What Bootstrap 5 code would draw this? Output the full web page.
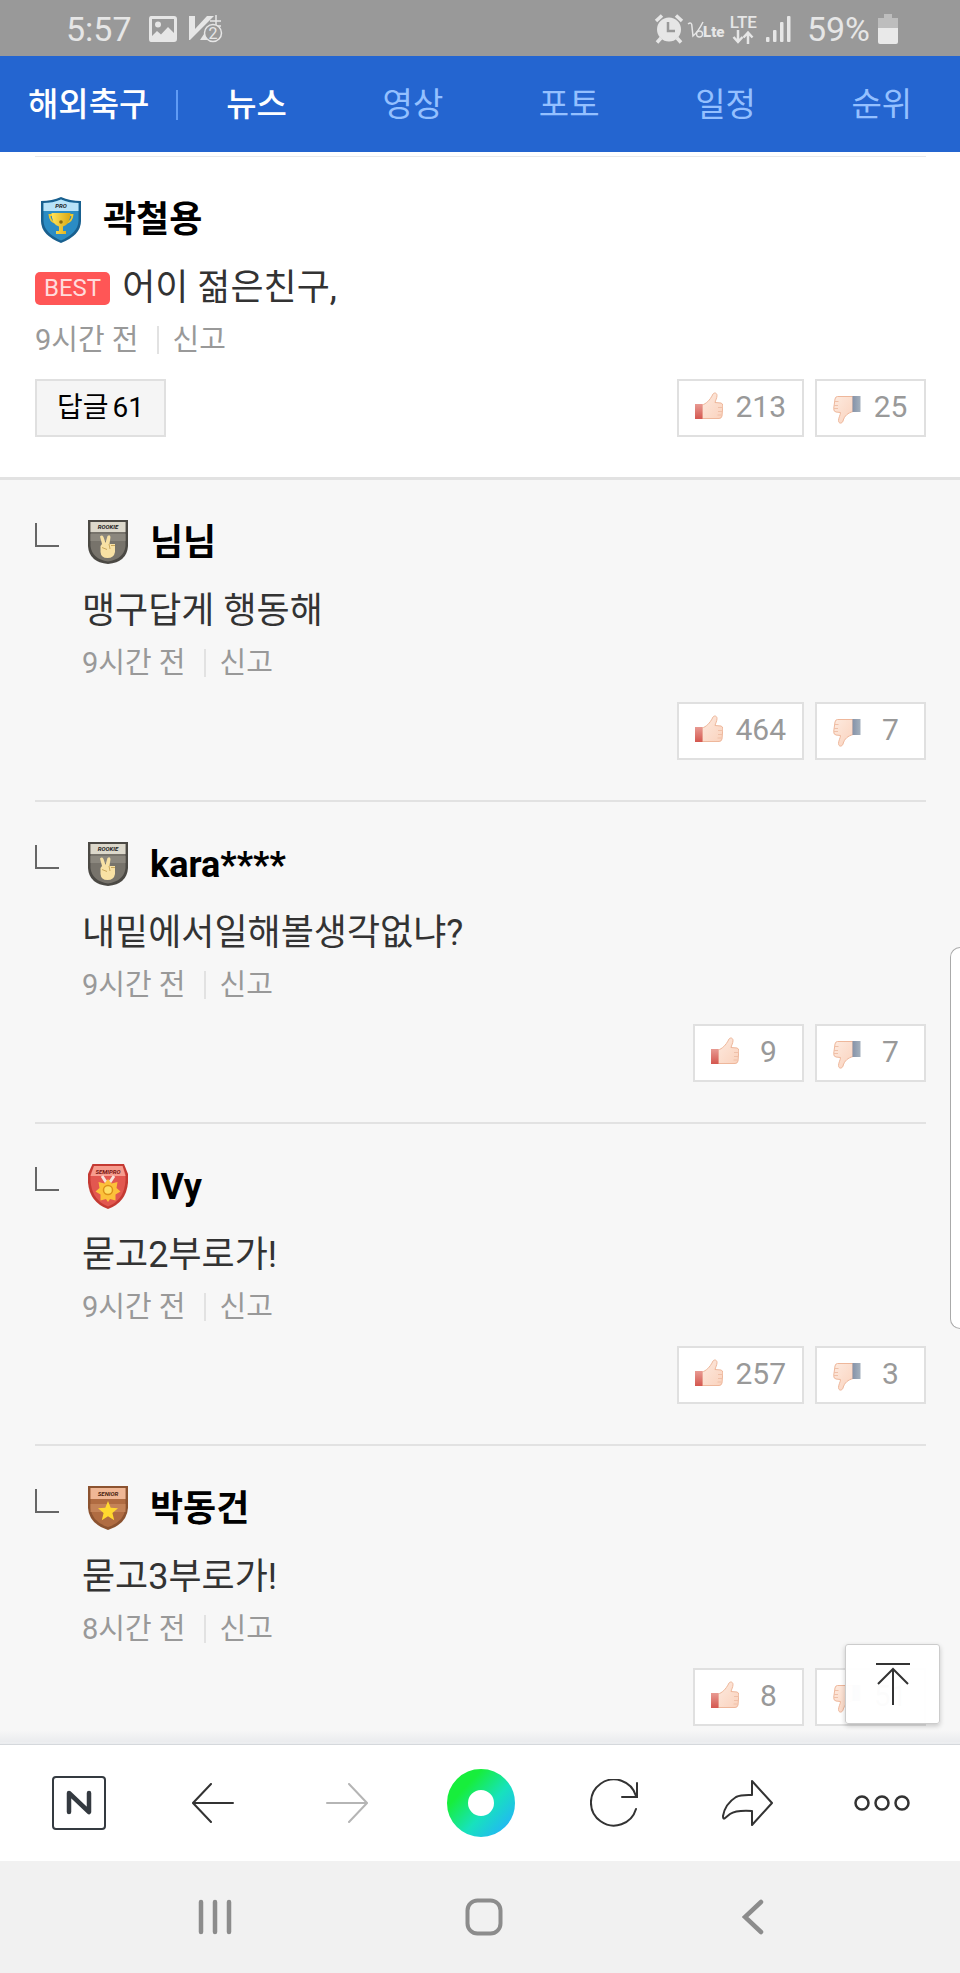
<!DOCTYPE html>
<html lang="ko">
<head>
<meta charset="utf-8">
<meta name="viewport" content="width=device-width, initial-scale=1">
<title>해외축구 뉴스 댓글</title>
<link href="https://cdn.jsdelivr.net/npm/bootstrap@5.3.0/dist/css/bootstrap.min.css" rel="stylesheet">
<style>
  body { font-family: Roboto, "Noto Sans CJK KR", sans-serif; background: #fff; color: #333; }
  button { font-family: inherit; }
  svg { display: block; flex: none; }

  .status-bar { height: 56px; background: #999; color: #e6e6e6; font-size: 34px; line-height: 56px; padding: 2px 62px 0 66px; }
  .net-label { font-size: 17px; line-height: 15px; font-weight: 500; }

  .topnav { height: 96px; background: #2465d0; font-size: 33px; line-height: 48px; padding-top: 2px; }
  .topnav a { color: #94c0ff; text-decoration: none; text-align: center; }
  .topnav a.brand-link { color: #fff; font-weight: 500; padding: 0 27px 0 28px; }
  .topnav a.active { color: #fff; font-weight: 500; }
  .topnav .rule { width: 2px; height: 30px; background: #5f9bf5; }
  .topnav .tabs > a { flex: 1 1 0; }

  .feed { scrollbar-width: none; }
  .feed::-webkit-scrollbar { display: none; }
  .gutter { padding-left: 35px; padding-right: 34px; }
  .top-line { height: 1px; background: #e9e9e9; margin: 4px 34px 0 35px; }
  .comment-main { padding-top: 41px; padding-bottom: 40px; border-bottom: 3px solid #e2e2e2; }
  .replies { background: #f7f7f7; }
  .reply { padding: 41px 0 40px; border-bottom: 2px solid #e2e2e2; }
  .reply:last-child { padding-bottom: 16px; border-bottom: 0; }
  .hook { width: 24px; height: 24px; border: solid #666; border-width: 0 0 2px 2px; margin: 2px 23px 0 0; flex: none; }

  .who { height: 44px; gap: 22px; padding-left: 6px; margin-bottom: 22px; }
  .who strong { font-size: 36px; line-height: 44px; font-weight: 700; color: #000; }
  .shield-label { font-size: 6px; font-weight: 700; font-style: italic; text-anchor: middle; }
  .body-text { font-size: 36px; line-height: 48px; margin-bottom: 8px; gap: 12px; }
  .best { background: #ff5656; color: #ffdcdc; font-size: 24px; line-height: 33px; font-weight: 400; border-radius: 5px; padding: 0 9px; }
  .meta { font-size: 29px; line-height: 40px; color: #999; margin-bottom: 19px; }
  .meta .rule { width: 2px; height: 28px; background: #e2e2e2; margin: 0 14px 0 18px; }
  .meta a { color: #999; text-decoration: none; }

  .box-btn { height: 58px; border: 2px solid #e0e0e0; background: #fff; color: #999; font-size: 30px; line-height: 50px; border-radius: 0; padding: 0 16px 2px; display: flex; align-items: center; gap: 12px; }
  .box-btn .count { min-width: 35px; text-align: center; }
  .box-btn.reply-btn { background: #f5f5f5; color: #000; font-size: 28px; padding: 0 20px; gap: 4px; }
  .votes { gap: 11px; }

  .to-top { right: 20px; bottom: 20px; width: 95px; height: 80px; background: rgba(255,255,255,.97); border: 1px solid #ccc; border-radius: 3px; box-shadow: 0 2px 5px rgba(0,0,0,.2); padding: 0; }
  .edge-handle { right: 0; top: 795px; width: 10px; height: 382px; background: #fff; border: 1px solid #aaa; border-right: 0; border-radius: 12px 0 0 12px; }
  .feed-fade { left: 0; right: 0; bottom: 0; height: 14px; background: linear-gradient(rgba(226,228,232,0), rgba(226,228,232,.7)); }

  .toolbar { height: 117px; border-top: 1px solid #d5d8dc; padding: 0 11px 0 12px; background: #fff; }
  .sysnav { height: 112px; background: #f1f1f1; padding: 0 72px 0 80px; }
  .bare { flex: 1 1 0; background: none; border: 0; padding: 0; display: flex; justify-content: center; align-items: center; }
</style>
</head>
<body>

<svg width="0" height="0" class="position-absolute" aria-hidden="true">
  <defs>
    <linearGradient id="gSkin" x1="0" y1="0" x2="1" y2="1"><stop offset="0" stop-color="#fdeadf"/><stop offset="1" stop-color="#fad2bd"/></linearGradient>
    <linearGradient id="gRedCuff" x1="0" y1="0" x2="0" y2="1"><stop offset="0" stop-color="#e89a92"/><stop offset="1" stop-color="#d4574f"/></linearGradient>
    <linearGradient id="gBlueCuff" x1="0" y1="0" x2="1" y2="0"><stop offset="0" stop-color="#8592a8"/><stop offset="1" stop-color="#a3b0bd"/></linearGradient>
    <linearGradient id="gRing" gradientUnits="userSpaceOnUse" x1="10" y1="14" x2="60" y2="60"><stop offset=".15" stop-color="#17ee3c"/><stop offset=".6" stop-color="#17e2bd"/><stop offset="1" stop-color="#22b9f2"/></linearGradient>
    <linearGradient id="gGold" x1="0" y1="0" x2="1" y2="0"><stop offset="0" stop-color="#ffe45a"/><stop offset="1" stop-color="#d9a712"/></linearGradient>
  </defs>
  <symbol id="thumb-up" viewBox="0 0 28 30">
    <path d="M7 13C11 12 15 8 17.500 3C18.500 0 22 .5 22 3.500C22 6 20.500 8.500 20 10.500L26 11Q28 11.500 27.800 14L27 24Q26.500 26.500 24 26.500H7Z" fill="url(#gSkin)" stroke="#eeb79b"/>
    <path d="M23 15.500h4M23 19.500h4M22.500 23h4" stroke="#efc0a8" fill="none"/>
    <rect y="12" width="7.500" height="15" fill="url(#gRedCuff)"/>
  </symbol>
  <symbol id="thumb-down" viewBox="0 -6 28 36">
    <path d="M20 1.500H4.500Q2.500 1.500 2 4L.7 13.500Q.5 16.500 3 17L7.500 17.500C7.500 20 5.500 22.500 5.500 25.500C5.500 28.800 9 29 10 26C11.500 20.500 15 18 20 16.500Z" fill="url(#gSkin)" stroke="#eeb79b"/>
    <path d="M1.500 6.500h4M1 10.500h4M1 13.500h4" stroke="#efc0a8" fill="none"/>
    <rect x="19.500" y="1" width="8" height="16" fill="url(#gBlueCuff)"/>
  </symbol>
  <symbol id="shield-pro" viewBox="0 0 40 46">
    <path d="M0 4Q11 4 20 0Q29 4 40 4V24Q40 38 20 46Q0 38 0 24Z" fill="#19608f"/>
    <path d="M2.500 6Q12 6 20 2.500Q28 6 37.500 6V24Q37 36 20 43.500Q3 36 2.500 24Z" fill="#2b8cc4"/>
    <path d="M2.500 6Q12 6 20 2.500Q28 6 37.500 6V14H2.500Z" fill="#b9e3f8"/>
    <path d="M11 18H8.500Q9 25 15 26M29 18h2.500Q31 25 25 26" fill="none" stroke="#f3c92a" stroke-width="1.800"/>
    <path d="M10.500 16H29.500Q29 28 22 29.500V34H25V37H15V34H18V29.500Q11 28 10.500 16Z" fill="url(#gGold)"/>
    <circle cx="20" cy="25" r="1.800" fill="#8a6a10"/>
  </symbol>
  <symbol id="shield-rookie" viewBox="0 0 40 46">
    <path d="M0 0H40V26Q39 42 20 44Q1 42 0 26Z" fill="#4b4944"/>
    <path d="M2.500 2H37.500V26Q36 39 20 41.500Q4 39 2.500 26Z" fill="#77736b"/>
    <path d="M2.500 14H37.500V21H2.500Z" fill="#8b877e"/>
    <path d="M2.500 2H37.500V12H2.500Z" fill="#dcd8cb"/>
    <path d="M12 16.500Q14 14.500 15.500 17L17.500 23L19.500 16Q22 14 22.500 17L21.500 24H27V32Q26 38 19.500 38Q13 38 12.500 32V26L14 24Z" fill="#f8e1a4"/>
    <path d="M14 27.500l5 2M21 24l1 5M27 25.500h-4" stroke="#c9a75c" fill="none"/>
  </symbol>
  <symbol id="shield-semipro" viewBox="0 0 40 46">
    <path d="M4.500 0H36L40 10Q42 37 20 45Q-2 37 0 10Z" fill="#c43a33"/>
    <path d="M6 2H34.500L37.500 10Q39 35 20 42.500Q1 35 2.500 10Z" fill="#e25750"/>
    <path d="M6 2H34.500L37.500 12H2.500Z" fill="#f69c8e"/>
    <path d="M14 12l6 9 6-9" stroke="#f6e3dc" stroke-width="3" fill="none"/>
    <path d="M20 15l3.500 4.500 6-1.500-1 6 4 3.500-5 3 0 6-5.500-1.500-2 3-2-3-5.500 1.500 0-6-5-3 4-3.500-1-6 6 1.500Z" fill="#fcc13a"/>
    <circle cx="20" cy="26" r="4.500" fill="#ffdf63" stroke="#dc9219" stroke-width="1.500"/>
  </symbol>
  <symbol id="shield-senior" viewBox="0 0 40 46">
    <path d="M0 0H40V22Q39 38 20 44Q1 38 0 22Z" fill="#8c5330"/>
    <path d="M2.500 2H37.500V22Q36 36 20 41Q4 36 2.500 22Z" fill="#b06c42"/>
    <path d="M2.500 18H37.500V26H2.500Z" fill="#c48358"/>
    <path d="M2.500 2H37.500V13H2.500Z" fill="#f0b795"/>
    <path d="M20 15l2.700 6.800 7.300.5-5.600 4.700 1.800 7.200-6.200-4-6.200 4 1.800-7.200-5.600-4.700 7.300-.5Z" fill="#ffd92f"/>
  </symbol>
</svg>

<div class="d-flex flex-column vh-100">

  <div class="status-bar d-flex justify-content-between">
    <div class="d-flex align-items-center">
      <span>5:57</span>
      <svg class="ms-3" width="30" height="28" viewBox="0 0 30 28" fill="#e6e6e6"><path fill-rule="evenodd" d="M3 1H26Q29 1 29 4V24Q29 27 26 27H3Q1 27 1 24V4Q1 1 3 1ZM4 4V21L9 16L13 19.500L20 12L26 18V4ZM10 6.500a3 3 0 1 1 0 6a3 3 0 0 1 0-6Z"/></svg>
      <svg class="ms-2" width="38" height="32" viewBox="0 0 38 32"><path d="M3 3H9V16L21 3H28L4 27H3Z" fill="#e6e6e6"/><path d="M14 27l6-9 3 9Z" fill="#e6e6e6"/><g fill="none" stroke="#e6e6e6" stroke-width="1.500"><path d="M24 8H35M30 2v11M24 13h11"/><circle cx="27" cy="20" r="8.500" fill="#999"/></g><text x="27" y="26" text-anchor="middle" font-size="16" fill="#e6e6e6">2</text></svg>
    </div>
    <div class="d-flex align-items-center">
      <svg width="32" height="30" viewBox="0 0 32 30"><circle cx="15" cy="15.500" r="12" fill="#e6e6e6"/><path d="M2 7l6-5.500M28 7l-6-5.500M7 24l-4 4.500M23 24l4 4.500" stroke="#e6e6e6" stroke-width="3.500"/><path d="M14 8v9h7" fill="none" stroke="#999" stroke-width="2.500"/></svg>
      <svg width="40" height="28" viewBox="0 0 40 28" fill="#e6e6e6"><path d="M2 9Q6 6 6 12L7 21Q12 17 17 7" fill="none" stroke="#e6e6e6" stroke-width="1.500"/><circle cx="13.500" cy="19" r="3" fill="none" stroke="#e6e6e6" stroke-width="1.300"/><text x="17" y="22" font-size="15" font-weight="900">Lte</text></svg>
      <div class="ms-1 d-flex flex-column align-items-center">
        <span class="net-label">LTE</span>
        <svg width="22" height="14" viewBox="0 0 22 14" fill="none" stroke="#e6e6e6" stroke-width="2.500"><path d="M6 0v12M1.500 7l4.500 5 4.500-5M16 14V3M11.500 7.500L16 2.500l4.500 5"/></svg>
      </div>
      <svg class="ms-2" width="26" height="28" viewBox="0 0 26 28" fill="#e6e6e6"><rect x="1" y="22" width="3.500" height="5" rx="1"/><rect x="8" y="15" width="3.500" height="12" rx="1"/><rect x="15" y="7" width="3.500" height="20" rx="1"/><rect x="22" y="1" width="3.500" height="26" rx="1"/></svg>
      <span class="ms-3">59%</span>
      <svg class="ms-2" width="20" height="30" viewBox="0 0 20 30"><path d="M6 0h8v4h6v12H0V4h6Z" fill="#bdbdbd"/><path d="M0 14H20V28Q20 30 18 30H2Q0 30 0 28Z" fill="#e9e9e9"/></svg>
    </div>
  </div>

  <nav class="topnav d-flex align-items-center">
    <a class="brand-link" href="#">해외축구</a>
    <span class="rule"></span>
    <div class="tabs d-flex flex-fill">
      <a class="active" href="#" aria-current="page">뉴스</a>
      <a href="#">영상</a>
      <a href="#">포토</a>
      <a href="#">일정</a>
      <a href="#">순위</a>
    </div>
  </nav>

  <div class="position-relative flex-fill overflow-hidden">
    <main class="feed h-100 overflow-auto">
      <div class="top-line"></div>
      <article class="comment-main gutter">
        <div class="who d-flex align-items-center"><svg width="40" height="46"><use href="#shield-pro"/><text class="shield-label" x="20" y="11" fill="#222">PRO</text></svg><strong>곽철용</strong></div>
        <div class="body-text d-flex align-items-center"><span class="best">BEST</span><span>어이 젊은친구,</span></div>
        <div class="meta d-flex align-items-center"><span>9시간 전</span><span class="rule"></span><a href="#">신고</a></div>
        <div class="d-flex justify-content-between">
          <button class="box-btn reply-btn" type="button"><span>답글</span><span>61</span></button>
          <div class="votes d-flex">
            <button class="box-btn" type="button" aria-label="좋아요"><svg width="28" height="30"><use href="#thumb-up"/></svg><span class="count">213</span></button>
            <button class="box-btn" type="button" aria-label="싫어요"><svg width="28" height="36"><use href="#thumb-down"/></svg><span class="count">25</span></button>
          </div>
        </div>
      </article>

      <section class="replies gutter">
        <article class="reply d-flex">
          <span class="hook"></span>
          <div class="flex-fill">
            <div class="who d-flex align-items-center"><svg width="40" height="46"><use href="#shield-rookie"/><text class="shield-label" x="20" y="9" fill="#222">ROOKIE</text></svg><strong>님님</strong></div>
            <div class="body-text">맹구답게 행동해</div>
            <div class="meta d-flex align-items-center"><span>9시간 전</span><span class="rule"></span><a href="#">신고</a></div>
            <div class="votes d-flex justify-content-end">
              <button class="box-btn" type="button" aria-label="좋아요"><svg width="28" height="30"><use href="#thumb-up"/></svg><span class="count">464</span></button>
              <button class="box-btn" type="button" aria-label="싫어요"><svg width="28" height="36"><use href="#thumb-down"/></svg><span class="count">7</span></button>
            </div>
          </div>
        </article>
        <article class="reply d-flex">
          <span class="hook"></span>
          <div class="flex-fill">
            <div class="who d-flex align-items-center"><svg width="40" height="46"><use href="#shield-rookie"/><text class="shield-label" x="20" y="9" fill="#222">ROOKIE</text></svg><strong>kara****</strong></div>
            <div class="body-text">내밑에서일해볼생각없냐?</div>
            <div class="meta d-flex align-items-center"><span>9시간 전</span><span class="rule"></span><a href="#">신고</a></div>
            <div class="votes d-flex justify-content-end">
              <button class="box-btn" type="button" aria-label="좋아요"><svg width="28" height="30"><use href="#thumb-up"/></svg><span class="count">9</span></button>
              <button class="box-btn" type="button" aria-label="싫어요"><svg width="28" height="36"><use href="#thumb-down"/></svg><span class="count">7</span></button>
            </div>
          </div>
        </article>
        <article class="reply d-flex">
          <span class="hook"></span>
          <div class="flex-fill">
            <div class="who d-flex align-items-center"><svg width="40" height="46"><use href="#shield-semipro"/><text class="shield-label" x="20" y="10" fill="#7a1712">SEMIPRO</text></svg><strong>IVy</strong></div>
            <div class="body-text">묻고2부로가!</div>
            <div class="meta d-flex align-items-center"><span>9시간 전</span><span class="rule"></span><a href="#">신고</a></div>
            <div class="votes d-flex justify-content-end">
              <button class="box-btn" type="button" aria-label="좋아요"><svg width="28" height="30"><use href="#thumb-up"/></svg><span class="count">257</span></button>
              <button class="box-btn" type="button" aria-label="싫어요"><svg width="28" height="36"><use href="#thumb-down"/></svg><span class="count">3</span></button>
            </div>
          </div>
        </article>
        <article class="reply d-flex">
          <span class="hook"></span>
          <div class="flex-fill">
            <div class="who d-flex align-items-center"><svg width="40" height="46"><use href="#shield-senior"/><text class="shield-label" x="20" y="10" fill="#4a2410">SENIOR</text></svg><strong>박동건</strong></div>
            <div class="body-text">묻고3부로가!</div>
            <div class="meta d-flex align-items-center"><span>8시간 전</span><span class="rule"></span><a href="#">신고</a></div>
            <div class="votes d-flex justify-content-end">
              <button class="box-btn" type="button" aria-label="좋아요"><svg width="28" height="30"><use href="#thumb-up"/></svg><span class="count">8</span></button>
              <button class="box-btn" type="button" aria-label="싫어요"><svg width="28" height="36"><use href="#thumb-down"/></svg><span class="count">51</span></button>
            </div>
          </div>
        </article>
      </section>
    </main>

    <div class="feed-fade position-absolute"></div>
    <div class="edge-handle position-absolute"></div>
    <button class="to-top position-absolute d-flex justify-content-center align-items-center" type="button" aria-label="맨 위로">
      <svg width="36" height="44" viewBox="0 0 36 44" fill="none" stroke="#333" stroke-width="2"><path d="M1 2H35M18 43V8M3 22L18 7L33 22"/></svg>
    </button>
  </div>

  <div class="toolbar d-flex">
    <button class="bare" type="button" aria-label="홈"><svg width="54" height="54" viewBox="0 0 54 54" fill="none" stroke="#343a40"><rect x="1" y="1" width="52" height="52" rx="3" stroke-width="2"/><path d="M17 36V17L37 36V17" stroke-width="4.500" stroke-linecap="round" stroke-linejoin="round"/></svg></button>
    <button class="bare" type="button" aria-label="뒤로"><svg width="42" height="40" viewBox="0 0 42 40" fill="none" stroke="#333" stroke-width="2" stroke-linecap="round"><path d="M41 20H1M19 1L1 20L19 39"/></svg></button>
    <button class="bare" type="button" aria-label="앞으로"><svg width="42" height="40" viewBox="0 0 42 40" fill="none" stroke="#b5b5b5" stroke-width="2" stroke-linecap="round"><path d="M1 20H41M23 1L41 20L23 39"/></svg></button>
    <button class="bare" type="button" aria-label="그린닷"><svg width="70" height="70" viewBox="0 0 70 70"><circle cx="35" cy="35" r="23.500" fill="none" stroke="url(#gRing)" stroke-width="21"/></svg></button>
    <button class="bare" type="button" aria-label="새로고침"><svg width="48" height="48" viewBox="0 0 48 48" fill="none" stroke="#333" stroke-width="2" stroke-linecap="round"><path d="M46 30A23 23 0 1 1 46 17M47 4V18H32"/></svg></button>
    <button class="bare" type="button" aria-label="공유"><svg width="52" height="46" viewBox="0 0 52 46" fill="none" stroke="#333" stroke-width="2" stroke-linejoin="round"><path d="M30 1L50 23L30 45V31Q14 30 8 34L2.500 38.500Q1 39 1 36Q3 24 14 17Q19 14.500 30 15Z"/></svg></button>
    <button class="bare" type="button" aria-label="더보기"><svg width="58" height="18" viewBox="0 0 58 18" fill="none" stroke="#333" stroke-width="2.500"><circle cx="9" cy="9" r="6.500"/><circle cx="29" cy="9" r="6.500"/><circle cx="49" cy="9" r="6.500"/></svg></button>
  </div>

  <div class="sysnav d-flex">
    <button class="bare" type="button" aria-label="최근 앱"><svg width="34" height="36" viewBox="0 0 34 36" stroke="#8c8c8c" stroke-width="4.500" stroke-linecap="round"><path d="M3 3V33M17 3V33M31 3V33"/></svg></button>
    <button class="bare" type="button" aria-label="시스템 홈"><svg width="38" height="38" viewBox="0 0 38 38" fill="none" stroke="#8c8c8c" stroke-width="4"><rect x="2.500" y="2.500" width="33" height="33" rx="10"/></svg></button>
    <button class="bare" type="button" aria-label="시스템 뒤로"><svg width="22" height="36" viewBox="0 0 22 36" fill="none" stroke="#8c8c8c" stroke-width="4.500" stroke-linecap="round"><path d="M19 3L3 18L19 33"/></svg></button>
  </div>
</div>

<script src="https://cdn.jsdelivr.net/npm/bootstrap@5.3.0/dist/js/bootstrap.bundle.min.js"></script>
</body>
</html>
